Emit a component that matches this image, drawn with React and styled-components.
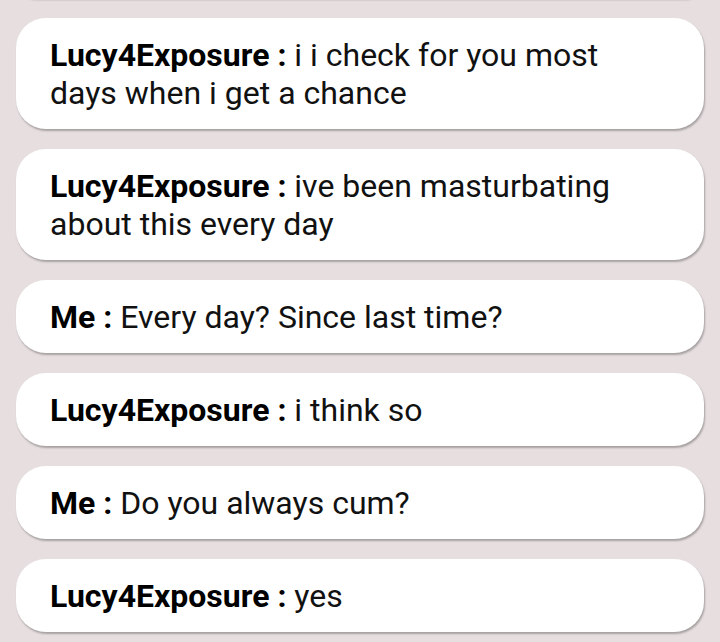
import React from 'react';
import styled, { createGlobalStyle } from 'styled-components';

const GlobalStyle = createGlobalStyle`
  html, body {
    margin: 0;
    padding: 0;
    background: #e7dfdf;
    font-family: Roboto, 'Noto Sans', sans-serif;
  }
`;

const Viewport = styled.div`
  height: 642px;
  overflow: hidden;
`;

const Feed = styled.div`
  display: flex;
  flex-direction: column;
  gap: 20px;
  padding: 0 16px;
  margin-top: -42px;
`;

const Bubble = styled.div`
  background: #fff;
  border-radius: 30px;
  padding: 18px 34px 17px 34px;
  box-shadow: 1px 2px 2px rgba(0, 0, 0, 0.28);
  font-size: 32px;
  line-height: 38px;
  color: #111;
`;

/* bottom edge of the previous message, scrolled out of view */
const EdgeBubble = styled(Bubble)`
  height: 40px;
  padding: 0;
  box-sizing: border-box;
`;

const Name = styled.span`
  font-weight: 700;
  color: #000;
`;

const messages = [
  { from: 'Lucy4Exposure', text: 'i i check for you most days when i get a chance' },
  { from: 'Lucy4Exposure', text: 'ive been masturbating about this every day' },
  { from: 'Me', text: 'Every day? Since last time?' },
  { from: 'Lucy4Exposure', text: 'i think so' },
  { from: 'Me', text: 'Do you always cum?' },
  { from: 'Lucy4Exposure', text: 'yes' },
];

function App() {
  return (
    <Viewport>
      <GlobalStyle />
      <Feed>
        <EdgeBubble />
        {messages.map((m, i) => (
          <Bubble key={i}>
            <Name>{m.from} :</Name> {m.text}
          </Bubble>
        ))}
      </Feed>
    </Viewport>
  );
}

export default App;
